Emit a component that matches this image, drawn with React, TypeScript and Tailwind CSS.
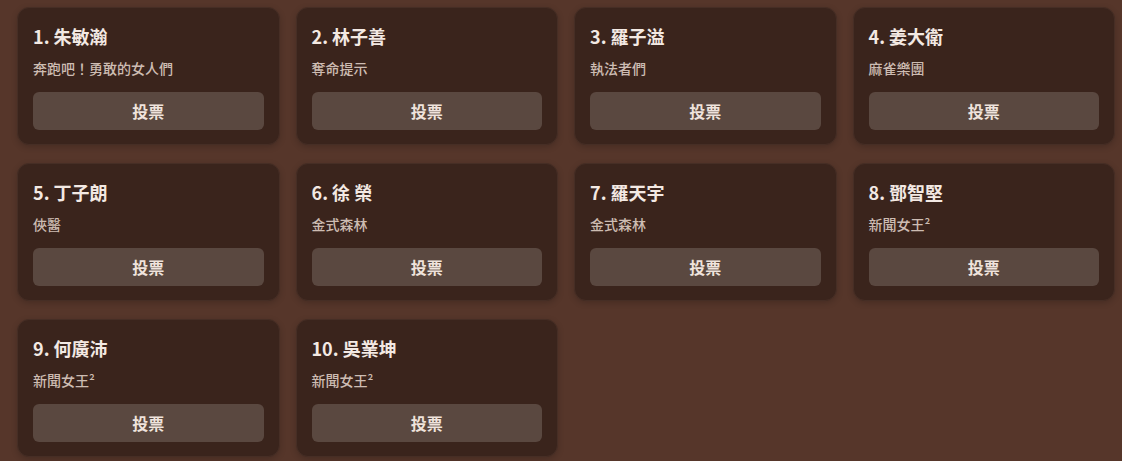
const candidates = [
  { name: "朱敏瀚", show: "奔跑吧！勇敢的女人們" },
  { name: "林子善", show: "奪命提示" },
  { name: "羅子溢", show: "執法者們" },
  { name: "姜大衛", show: "麻雀樂團" },
  { name: "丁子朗", show: "俠醫" },
  { name: "徐 榮", show: "金式森林" },
  { name: "羅天宇", show: "金式森林" },
  { name: "鄧智堅", show: "新聞女王²" },
  { name: "何廣沛", show: "新聞女王²" },
  { name: "吳業坤", show: "新聞女王²" },
];

function CandidateCard({ index, name, show }: { index: number; name: string; show: string }) {
  return (
    <div className="flex flex-col rounded-xl border border-[#462e25] bg-[#3a241c] px-[15px] pt-[14px] pb-[14px] shadow-[0_2px_6px_rgba(0,0,0,0.18)]">
      <h2 className="text-lg leading-7 font-bold text-[#f3e9e3]">
        {index}. {name}
      </h2>
      <p className="mt-[8px] text-sm leading-5 font-medium text-[#cdbcb2]">{show}</p>
      <button className="mt-[14px] h-[38px] w-full rounded-md bg-[#5a4840] text-base font-semibold text-[#efe3dc]">
        投票
      </button>
    </div>
  );
}

export default function App() {
  return (
    <div
      className="min-h-[461px] bg-[#56362a] pt-[7px] pr-[7px] pb-4 pl-[17px]"
      style={{ fontFamily: '"Noto Sans CJK TC", "Noto Sans", sans-serif' }}
    >
      <div className="grid grid-cols-4 gap-x-4 gap-y-[18px]">
        {candidates.map((c, i) => (
          <CandidateCard key={i} index={i + 1} name={c.name} show={c.show} />
        ))}
      </div>
    </div>
  );
}
